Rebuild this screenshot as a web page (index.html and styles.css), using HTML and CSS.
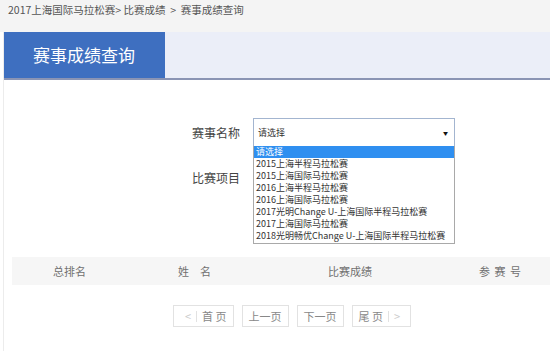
FILE: index.html
```html
<!DOCTYPE html>
<html lang="zh-CN">
<head>
  <meta charset="UTF-8">
  <title>赛事成绩查询</title>
  <link rel="stylesheet" href="styles.css">
</head>
<body>

<div class="crumbs">2017上海国际马拉松赛&gt; 比赛成绩 &nbsp;&gt; &nbsp;赛事成绩查询</div>

<div class="page">
  <div class="title-bar">
    <div class="title-tab">赛事成绩查询</div>
  </div>

  <div class="query">
    <div class="row">
      <span class="label">赛事名称</span>
      <div class="select-wrap">
        <div class="select">请选择<span class="arrow">▼</span></div>
        <ul class="options">
          <li class="on">请选择</li>
          <li>2015上海半程马拉松赛</li>
          <li>2015上海国际马拉松赛</li>
          <li>2016上海半程马拉松赛</li>
          <li>2016上海国际马拉松赛</li>
          <li>2017光明Change U-上海国际半程马拉松赛</li>
          <li>2017上海国际马拉松赛</li>
          <li>2018光明畅优Change U-上海国际半程马拉松赛</li>
        </ul>
      </div>
    </div>
    <div class="row">
      <span class="label">比赛项目</span>
    </div>
  </div>

  <div class="table-head">
    <span class="col col-rank">总排名</span>
    <span class="col col-name">姓　名</span>
    <span class="col col-score">比赛成绩</span>
    <span class="col col-bib">参 赛 号</span>
  </div>

  <div class="pager">
    <a class="btn btn-first"><span class="sep">&lt;</span>首 页</a>
    <a class="btn">上一页</a>
    <a class="btn">下一页</a>
    <a class="btn btn-last">尾 页<span class="sep">&gt;</span></a>
  </div>
</div>

</body>
</html>
```

FILE: styles.css
```css
body {
  margin: 0;
  background: #fff;
  font-family: "Noto Sans CJK SC", "Noto Sans", sans-serif;
  color: #555;
}

.crumbs {
  height: 32px;
  padding: 0 8px;
  background: #f4f4f4;
  font-size: 10.5px;
  line-height: 20px;
  color: #555;
}

.page {
  margin-left: 3px;
  border-left: 1px solid #ececec;
  background: #fff;
  min-height: 319px;
}

.title-bar {
  height: 46px;
  background: #ebeef8;
  border-bottom: 2px solid #8a94b4;
  display: flex;
}

.title-tab {
  width: 161px;
  background: #3e6fc0;
  color: #fff;
  font-size: 17px;
  line-height: 46px;
  padding-left: 29px;
  box-sizing: border-box;
}

.query {
  padding-top: 38px;
  padding-left: 188px;
  height: 177px;
  box-sizing: border-box;
}

.row {
  display: flex;
  align-items: center;
  height: 29px;
  margin-bottom: 16px;
}

.label {
  font-size: 12px;
  color: #444;
  width: 61px;
}

.select-wrap {
  position: relative;
}

.select {
  width: 196px;
  height: 27px;
  border: 1px solid #a3b5d0;
  font-size: 9px;
  line-height: 27px;
  padding-left: 4px;
  color: #333;
  position: relative;
}

.arrow {
  position: absolute;
  right: 6px;
  top: 0;
  font-size: 5px;
  color: #111;
}

.options {
  position: absolute;
  top: 28px;
  left: 0;
  width: 200px;
  margin: 0;
  padding: 0 0 1px;
  list-style: none;
  background: #fff;
  border: 1px solid #a9a9a9;
  border-top: none;
  z-index: 10;
}

.options li {
  height: 12px;
  line-height: 12px;
  font-size: 9px;
  padding-left: 2px;
  color: #333;
  white-space: nowrap;
}

.options li.on {
  background: #2f8ff0;
  color: #fff;
}

.table-head {
  margin-left: 8px;
  height: 28px;
  background: #f6f6f6;
  display: flex;
  align-items: center;
  font-size: 11px;
  color: #707070;
}

.col-rank { margin-left: 41px; width: 125px; }
.col-name { width: 150px; }
.col-score { width: 151px; }
.col-bib { letter-spacing: 1px; }

.pager {
  display: flex;
  gap: 8px;
  margin-top: 20px;
  padding-left: 169px;
}

.btn {
  height: 20px;
  border: 1px solid #e2e2e2;
  font-size: 11px;
  line-height: 20px;
  color: #888;
  padding: 0 6px;
  display: flex;
  align-items: center;
}

.btn .sep {
  color: #ccc;
  line-height: 11px;
}

.btn-first .sep {
  padding: 0 5px;
  margin-right: 5px;
  border-right: 1px solid #e2e2e2;
}

.btn-last .sep {
  padding: 0 4px 0 5px;
  margin-left: 5px;
  border-left: 1px solid #e2e2e2;
}
```
